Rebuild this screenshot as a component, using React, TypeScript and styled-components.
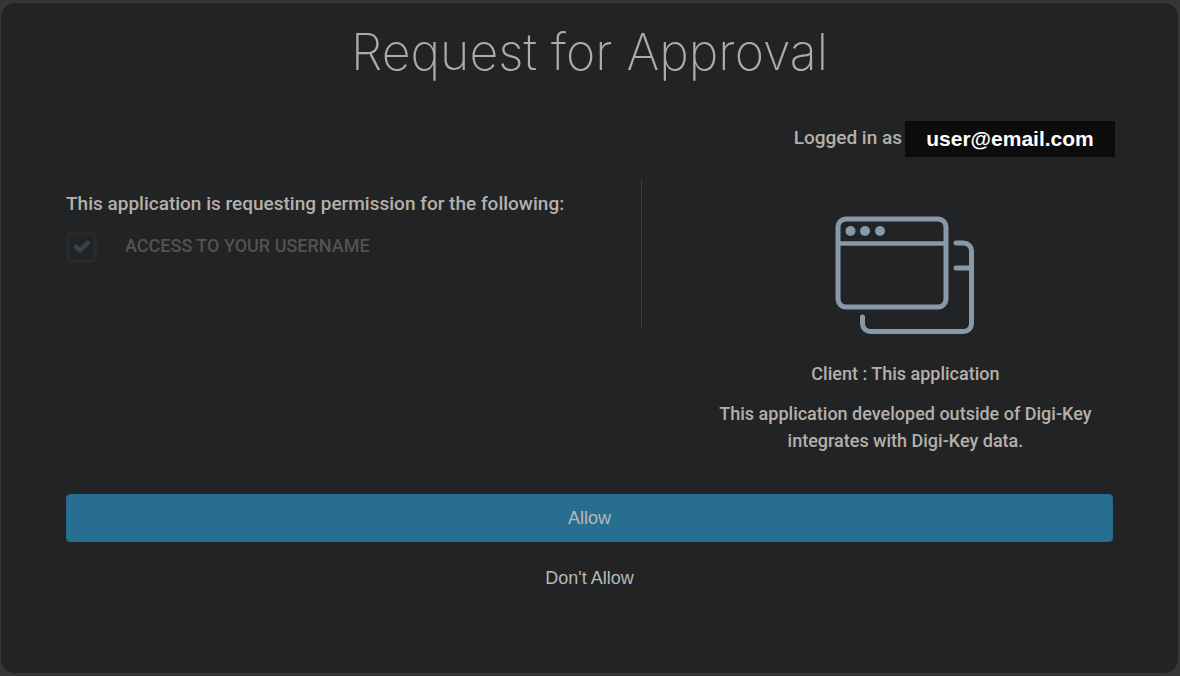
import React from "react";
import styled, { createGlobalStyle } from "styled-components";

const GlobalStyle = createGlobalStyle`
  * { box-sizing: border-box; }
  body {
    margin: 0;
    background: #373635;
    color: #b5b0aa;
    font: 500 18px/27px Roboto, "Liberation Sans", sans-serif;
  }
`;

const Page = styled.div`
  min-height: 100vh;
  display: flex;
  padding: 3px 2px 3px 1px;
`;

const Panel = styled.main`
  flex: 1;
  padding: 16px 65px 64px;
  border-radius: 14px;
  background: #222325;
`;

const Title = styled.h1`
  margin: 0;
  font: 200 50px/66px Inter, sans-serif;
  text-align: center;
  color: #b0aba4;
`;

const Account = styled.div`
  display: flex;
  justify-content: flex-end;
  gap: 3px;
  margin: 36px -2px 0 0;
  font-size: 19px;
  line-height: 34px;
`;

const Email = styled.strong`
  width: 210px;
  background: #0c0c0c;
  color: #fff;
  font: 700 21px/36px "Liberation Sans", sans-serif;
  text-align: center;
`;

const Columns = styled.div`
  display: grid;
  grid-template-columns: 55fr 45fr;
  margin-top: 22px;
`;

const Permissions = styled.section`
  height: 150px;
  padding-top: 11px;
  border-right: 1px solid #3b3b3b;
`;

const Heading = styled.h2`
  margin: 0;
  font: inherit;
  font-size: 19px;
`;

const Permission = styled.label`
  display: flex;
  gap: 28px;
  margin-top: 15px;
  color: #54524f;
  text-transform: uppercase;
`;

const CheckFrame = styled.span`
  position: relative;
  display: block;
  width: 31px;
  height: 31px;
`;

const CheckInput = styled.input`
  appearance: none;
  display: block;
  width: 100%;
  height: 100%;
  margin: 0;
  border: 4px solid #28292b;
  border-radius: 4px;
`;

const CheckMark = styled.svg`
  position: absolute;
  inset: 0;
`;

const Client = styled.section`
  display: flex;
  flex-direction: column;
  align-items: center;
  padding: 37px 18px 0 74px;
  text-align: center;
`;

const ClientText = styled.p`
  margin: 13px 0 0;
`;

const ClientName = styled(ClientText)`
  margin-top: 25px;
`;

const Actions = styled.div`
  display: grid;
  gap: 12px;
  margin-top: 40px;
`;

const Button = styled.button<{ $primary?: boolean }>`
  height: 48px;
  border: ${(p) => (p.$primary ? "1px solid #26678a" : "0")};
  border-radius: 4px;
  background: ${(p) => (p.$primary ? "#286e91" : "transparent")};
  color: #b8b8b8;
  font: 18px/27px "Liberation Sans", Arial, sans-serif;
`;

const WindowsIcon = () => (
  <svg width="140" height="119" viewBox="0 0 140 119" fill="none" stroke="#8799a9" strokeWidth="5" strokeLinecap="round" aria-hidden="true">
    <rect x="3" y="3" width="108" height="88" rx="8" />
    <path d="M4 27.500h107" strokeWidth="4.5" strokeLinecap="butt" />
    <g fill="#8799a9" stroke="none">
      <circle cx="15.500" cy="15" r="5" />
      <circle cx="30" cy="15" r="5" />
      <circle cx="45" cy="15" r="5" />
    </g>
    <path d="M121 27h7.500a8 8 0 0 1 8 8V107.500a8 8 0 0 1-8 8H35.500a8 8 0 0 1-8-8v-6.500M121 52H136.500" />
  </svg>
);

export default function App() {
  return (
    <Page>
      <GlobalStyle />
      <Panel>
        <Title>Request for Approval</Title>
        <Account>
          <span>Logged in as</span>
          <Email>user@email.com</Email>
        </Account>
        <Columns>
          <Permissions>
            <Heading>This application is requesting permission for the following:</Heading>
            <Permission>
              <CheckFrame>
                <CheckInput type="checkbox" defaultChecked disabled />
                <CheckMark viewBox="0 0 31 31" fill="none" stroke="#383f45" strokeWidth="4.5" aria-hidden="true">
                  <path d="M8.500 13.500l5.500 5L23.500 9.500" />
                </CheckMark>
              </CheckFrame>
              <span>Access to your username</span>
            </Permission>
          </Permissions>
          <Client>
            <WindowsIcon />
            <ClientName>Client : This application</ClientName>
            <ClientText>This application developed outside of Digi-Key integrates with Digi-Key data.</ClientText>
          </Client>
        </Columns>
        <Actions>
          <Button type="button" $primary>Allow</Button>
          <Button type="button">Don't Allow</Button>
        </Actions>
      </Panel>
    </Page>
  );
}
